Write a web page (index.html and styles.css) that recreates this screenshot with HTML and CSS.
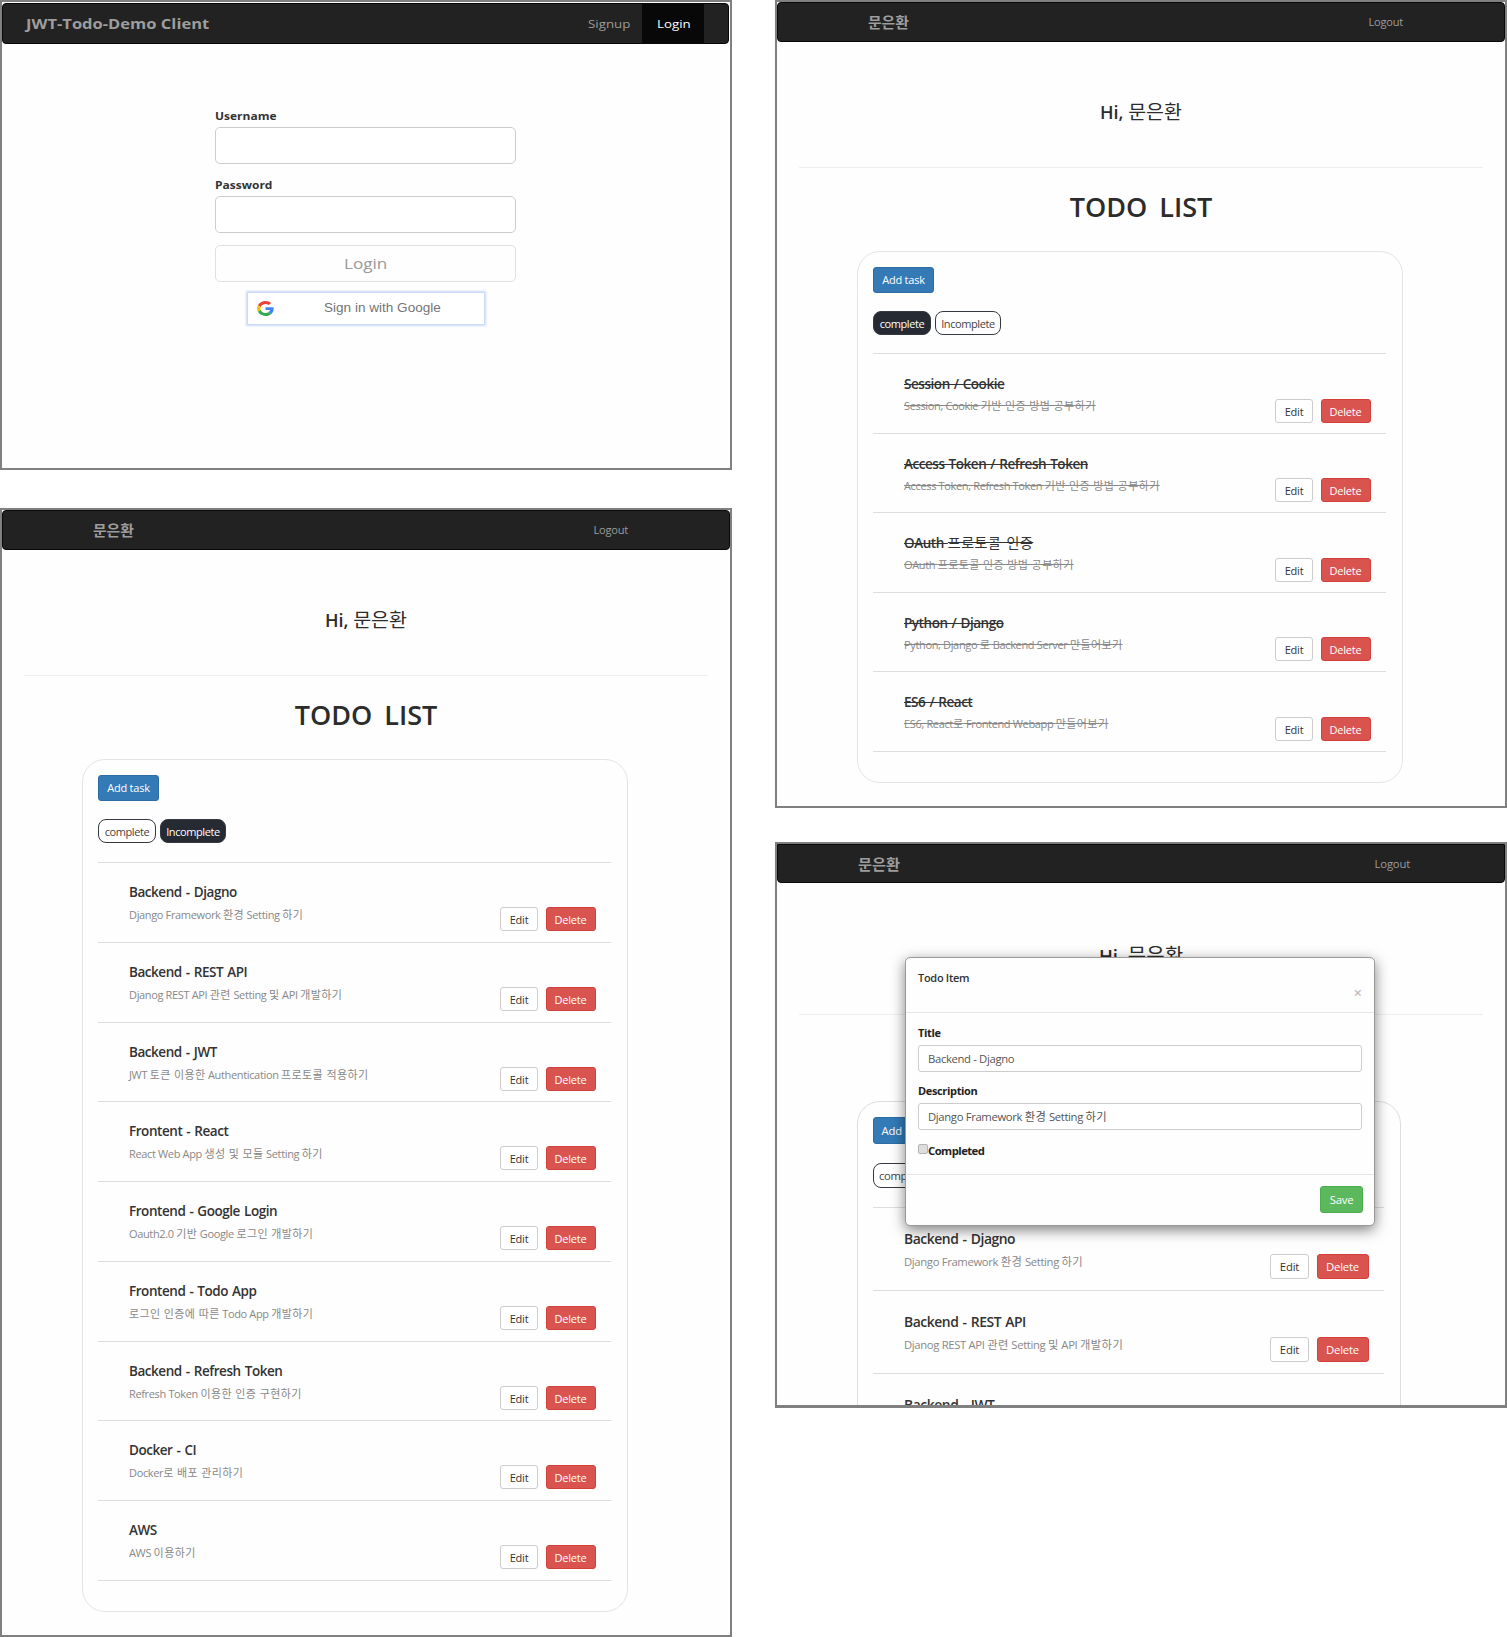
FILE: index.html
```html
<!DOCTYPE html>
<html lang="en">
<head>
<meta charset="utf-8">
<title>JWT-Todo-Demo Client</title>
<link rel="stylesheet" href="styles.css">
</head>
<body>
<main class="board">
  <div class="column">
    <section class="screen screen-login">
      <nav class="navbar">
        <span class="brand"><span class="wide">JWT-Todo-Demo Client</span></span>
        <a class="nav-link"><span class="wide">Signup</span></a>
        <a class="nav-link active"><span class="wide">Login</span></a>
      </nav>
      <form class="login-form">
        <label class="login-label"><span class="wide">Username</span></label>
        <div class="login-input"></div>
        <label class="login-label"><span class="wide">Password</span></label>
        <div class="login-input"></div>
        <div class="login-button"><span class="wide">Login</span></div>
        <div class="google-button">
          <svg class="google-logo" viewBox="0 0 48 48" preserveAspectRatio="none">
            <path fill="#EA4335" d="M24 9.5c3.54 0 6.71 1.22 9.21 3.6l6.85-6.85C35.9 2.38 30.47 0 24 0 14.62 0 6.51 5.38 2.56 13.22l7.98 6.19C12.43 13.72 17.74 9.5 24 9.5z"/>
            <path fill="#4285F4" d="M46.98 24.55c0-1.57-.15-3.09-.38-4.55H24v9.02h12.94c-.58 2.96-2.26 5.48-4.78 7.18l7.73 6c4.51-4.18 7.09-10.36 7.09-17.65z"/>
            <path fill="#FBBC05" d="M10.53 28.59c-.48-1.45-.76-2.99-.76-4.59s.27-3.14.76-4.59l-7.98-6.19C.92 16.46 0 20.12 0 24c0 3.88.92 7.54 2.56 10.78l7.97-6.19z"/>
            <path fill="#34A853" d="M24 48c6.48 0 11.93-2.13 15.89-5.81l-7.73-6c-2.15 1.45-4.92 2.3-8.16 2.3-6.26 0-11.57-4.22-13.47-9.91l-7.98 6.19C6.51 42.62 14.62 48 24 48z"/>
          </svg>
          <span class="google-text">Sign in with Google</span>
        </div>
      </form>
    </section>

    <section class="screen screen-todo screen-incomplete">
      <nav class="navbar"><span class="brand">문은환</span><a class="nav-link">Logout</a></nav>
      <header class="greeting">Hi, <span class="name">문은환</span></header>
      <h1 class="heading">TODO LIST</h1>
      <div class="card">
        <div class="btn btn-add">Add task</div>
        <div class="tabs"><span class="tab tab-complete">complete</span><span class="tab tab-incomplete on">Incomplete</span></div>
        <ul class="list">
          <li class="item"><div class="item-text"><b class="item-title">Backend - Djagno</b><span class="item-desc">Django Framework <span class="ko">환경</span> Setting <span class="ko">하기</span></span></div><span class="btn btn-edit">Edit</span><span class="btn btn-delete">Delete</span></li>
          <li class="item"><div class="item-text"><b class="item-title">Backend - REST API</b><span class="item-desc">Djanog REST API <span class="ko">관련</span> Setting <span class="ko">및</span> API <span class="ko">개발하기</span></span></div><span class="btn btn-edit">Edit</span><span class="btn btn-delete">Delete</span></li>
          <li class="item"><div class="item-text"><b class="item-title">Backend - JWT</b><span class="item-desc">JWT <span class="ko">토큰 이용한</span> Authentication <span class="ko">프로토콜 적용하기</span></span></div><span class="btn btn-edit">Edit</span><span class="btn btn-delete">Delete</span></li>
          <li class="item"><div class="item-text"><b class="item-title">Frontent - React</b><span class="item-desc">React Web App <span class="ko">생성 및 모듈</span> Setting <span class="ko">하기</span></span></div><span class="btn btn-edit">Edit</span><span class="btn btn-delete">Delete</span></li>
          <li class="item"><div class="item-text"><b class="item-title">Frontend - Google Login</b><span class="item-desc">Oauth2.0 <span class="ko">기반</span> Google <span class="ko">로그인 개발하기</span></span></div><span class="btn btn-edit">Edit</span><span class="btn btn-delete">Delete</span></li>
          <li class="item"><div class="item-text"><b class="item-title">Frontend - Todo App</b><span class="item-desc"><span class="ko">로그인 인증에 따른</span> Todo App <span class="ko">개발하기</span></span></div><span class="btn btn-edit">Edit</span><span class="btn btn-delete">Delete</span></li>
          <li class="item"><div class="item-text"><b class="item-title">Backend - Refresh Token</b><span class="item-desc">Refresh Token <span class="ko">이용한 인증 구현하기</span></span></div><span class="btn btn-edit">Edit</span><span class="btn btn-delete">Delete</span></li>
          <li class="item"><div class="item-text"><b class="item-title">Docker - CI</b><span class="item-desc">Docker<span class="ko">로 배포 관리하기</span></span></div><span class="btn btn-edit">Edit</span><span class="btn btn-delete">Delete</span></li>
          <li class="item"><div class="item-text"><b class="item-title">AWS</b><span class="item-desc">AWS <span class="ko">이용하기</span></span></div><span class="btn btn-edit">Edit</span><span class="btn btn-delete">Delete</span></li>
        </ul>
      </div>
    </section>
  </div>

  <div class="column">
    <section class="screen screen-todo screen-complete">
      <nav class="navbar"><span class="brand">문은환</span><a class="nav-link">Logout</a></nav>
      <header class="greeting">Hi, <span class="name">문은환</span></header>
      <h1 class="heading">TODO LIST</h1>
      <div class="card">
        <div class="btn btn-add">Add task</div>
        <div class="tabs"><span class="tab tab-complete on">complete</span><span class="tab tab-incomplete">Incomplete</span></div>
        <ul class="list done">
          <li class="item"><div class="item-text"><b class="item-title">Session / Cookie</b><span class="item-desc">Session, Cookie <span class="ko">기반 인증 방법 공부하기</span></span></div><span class="btn btn-edit">Edit</span><span class="btn btn-delete">Delete</span></li>
          <li class="item"><div class="item-text"><b class="item-title">Access Token / Refresh Token</b><span class="item-desc">Access Token, Refresh Token <span class="ko">기반 인증 방법 공부하기</span></span></div><span class="btn btn-edit">Edit</span><span class="btn btn-delete">Delete</span></li>
          <li class="item"><div class="item-text"><b class="item-title">OAuth <span class="ko">프로토콜 인증</span></b><span class="item-desc">OAuth <span class="ko">프로토콜 인증 방법 공부하기</span></span></div><span class="btn btn-edit">Edit</span><span class="btn btn-delete">Delete</span></li>
          <li class="item"><div class="item-text"><b class="item-title">Python / Django</b><span class="item-desc">Python, Django <span class="ko">로</span> Backend Server <span class="ko">만들어보기</span></span></div><span class="btn btn-edit">Edit</span><span class="btn btn-delete">Delete</span></li>
          <li class="item"><div class="item-text"><b class="item-title">ES6 / React</b><span class="item-desc">ES6, React<span class="ko">로</span> Frontend Webapp <span class="ko">만들어보기</span></span></div><span class="btn btn-edit">Edit</span><span class="btn btn-delete">Delete</span></li>
        </ul>
      </div>
    </section>

    <section class="screen screen-todo screen-modal">
      <nav class="navbar"><span class="brand">문은환</span><a class="nav-link">Logout</a></nav>
      <header class="greeting">Hi, <span class="name">문은환</span></header>
      <h1 class="heading">TODO LIST</h1>
      <div class="card">
        <div class="btn btn-add">Add task</div>
        <div class="tabs"><span class="tab tab-complete">complete</span></div>
        <ul class="list">
          <li class="item"><div class="item-text"><b class="item-title">Backend - Djagno</b><span class="item-desc">Django Framework <span class="ko">환경</span> Setting <span class="ko">하기</span></span></div><span class="btn btn-edit">Edit</span><span class="btn btn-delete">Delete</span></li>
          <li class="item"><div class="item-text"><b class="item-title">Backend - REST API</b><span class="item-desc">Djanog REST API <span class="ko">관련</span> Setting <span class="ko">및</span> API <span class="ko">개발하기</span></span></div><span class="btn btn-edit">Edit</span><span class="btn btn-delete">Delete</span></li>
          <li class="item"><div class="item-text"><b class="item-title">Backend - JWT</b></div></li>
        </ul>
      </div>
      <div class="modal">
        <div class="modal-header"><span class="modal-title">Todo Item</span><span class="modal-close">×</span></div>
        <div class="modal-body">
          <label class="field-label">Title</label>
          <div class="field">Backend - Djagno</div>
          <label class="field-label">Description</label>
          <div class="field">Django Framework <span class="ko">환경</span> Setting <span class="ko">하기</span></div>
          <div class="check-row"><span class="checkbox"></span><span class="check-label">Completed</span></div>
        </div>
        <div class="modal-footer"><span class="btn btn-save">Save</span></div>
      </div>
    </section>
  </div>
</main>
</body>
</html>
```
FILE: styles.css
```css
* { box-sizing: border-box; }

body {
  margin: 0;
  background: #fff;
  color: #333;
  font-family: "Open Sans", "Noto Sans CJK KR", sans-serif;
  font-size: 11px;
  line-height: 20px;
}

.board {
  display: grid;
  grid-template-columns: 732px 732px;
  column-gap: 43px;
  width: 1507px;
  height: 1637px;
  overflow: hidden;
}

.column { display: flex; flex-direction: column; }

.screen {
  border: 2px solid #808080;
  background: #fefefe;
  overflow: hidden;
  flex: none;
}

/* navigation bar */
.navbar {
  display: flex;
  align-items: center;
  height: 40px;
  background: #222;
  border: 1px solid #080808;
  border-radius: 4px;
  color: #9d9d9d;
}
.brand { flex: 1; font-size: 14.8px; font-weight: 700; white-space: nowrap; }

/* login screen */
.wide { display: inline-block; transform: scaleX(1.18); transform-origin: 0 50%; }
.screen-login { height: 470px; margin-bottom: 38px; }
.screen-login .navbar { height: 41px; margin: 1px 1px 0 0; padding: 0 24px 0 23px; }
.screen-login .brand { font-size: 14px; font-weight: 700; }
.screen-login .nav-link {
  width: 62px;
  height: 39px;
  padding: 1px 0 0 15px;
  font-size: 11.3px;
  line-height: 38px;
}
.screen-login .nav-link:not(.active) { width: 69px; }
.screen-login .active { background: #080808; color: #fff; }

.login-form { width: 301px; margin: 61px auto 0 213px; }
.login-label {
  display: block;
  height: 22px;
  font-size: 11px;
  font-weight: 700;
  line-height: 21px;
}
.login-label .wide { transform: scaleX(1.09); }
.login-input {
  height: 37px;
  margin-bottom: 9.5px;
  border: 1px solid #ccc;
  border-radius: 5px;
  background: #fff;
}
.login-button {
  height: 37px;
  margin-top: 12px;
  border: 1px solid #e0e0e0;
  border-radius: 5px;
  padding-left: 128px;
  color: #999;
  font-size: 14.5px;
  line-height: 36px;
}
.google-button {
  display: flex;
  align-items: center;
  width: 236px;
  height: 31px;
  margin: 11px 0 0 33px;
  padding: 0 9px;
  background: #fff;
  box-shadow: 0 0 2px 2px #c9d9f8;
  color: #757575;
}
.google-logo { width: 17px; height: 15px; }
.google-text {
  margin: -1px 0 0 50px;
  font: 12px/20px "Liberation Sans", sans-serif;
  white-space: nowrap;
  transform: scaleX(1.13);
  transform-origin: 0 50%;
}

/* todo screens */
.screen-todo .navbar { padding: 0 101px 0 90px; }
.screen-todo .nav-link { letter-spacing: -.2px; }
.greeting {
  height: 126px;
  margin: 0 22px;
  padding-top: 55px;
  border-bottom: 1px solid #eee;
  color: #2c2c2c;
  font-size: 18px;
  font-weight: 600;
  line-height: 30px;
  text-align: center;
}
.name { font-size: 19.5px; font-weight: 400; }
.heading {
  margin: 19px 0 0;
  height: 64px;
  color: #2c2c2c;
  font-size: 27px;
  font-weight: 600;
  line-height: 40px;
  text-align: center;
  word-spacing: 5px;
}
.card {
  width: 546px;
  margin-left: 80px;
  padding: 15px 16px 30px 15px;
  border: 1px solid #e4e4e4;
  border-radius: 23px;
}
.btn {
  display: block;
  height: 24px;
  border: 1px solid transparent;
  border-radius: 3px;
  letter-spacing: -.2px;
  line-height: 24px;
  text-align: center;
  white-space: nowrap;
}
.btn-add { width: 61px; height: 26px; background: #337ab7; border-color: #2e6da4; color: #fff; }
.tabs { display: flex; gap: 4px; margin-top: 18px; height: 43px; }
.tab {
  height: 24px;
  border: 1px solid #343a40;
  border-radius: 8px;
  background: #fff;
  color: #444;
  letter-spacing: -.4px;
  line-height: 23px;
  text-align: center;
}
.tab-complete { width: 58px; }
.tab-incomplete { width: 66px; }
.tab.on { background: #252a33; color: #fff; }

.list { margin: 0; padding: 0; list-style: none; border-top: 1px solid #ddd; }
.item {
  display: flex;
  height: 79.75px;
  padding: 19px 15.5px 0 31px;
  border-bottom: 1px solid #ddd;
}
.item-text { flex: 1; white-space: nowrap; }
.item-title {
  display: block;
  width: max-content;
  color: #333;
  font-size: 13.5px;
  font-weight: 600;
  letter-spacing: -.45px;
  word-spacing: 1px;
}
.item-desc { display: block; width: max-content; margin-top: 3px; color: #888; letter-spacing: -.35px; }
.ko { letter-spacing: .4px; }
.item-title .ko { font-size: 14px; font-weight: 400; letter-spacing: .5px; }
.item .btn { margin-top: 25px; }
.btn-edit { width: 38px; background: #fff; border-color: #ccc; color: #333; }
.btn-delete { width: 50px; margin-left: 7.5px; background: #d9534f; border-color: #d43f3a; color: #fff; }
.done .item-title, .done .item-desc { text-decoration: line-through; }

.screen-incomplete { height: 1129px; }
.screen-complete { height: 808px; margin-bottom: 34px; }
.screen-complete .tabs { height: 42px; }
.screen-complete .item { height: 79.6px; padding-top: 20px; }
.screen-complete .item-desc { margin-top: 2px; }
.screen-complete .item .btn { margin-top: 24.5px; }

/* screen with the open dialog */
.screen-modal { position: relative; height: 566px; border-bottom: 3px solid #808080; font-size: 11.3px; }
.screen-modal .navbar { height: 39px; padding: 0 94px 0 80px; border-radius: 0 0 4px 4px; }
.screen-modal .brand { font-size: 15.2px; }
.screen-modal .greeting { height: 132px; padding-top: 58px; font-size: 18.5px; }
.screen-modal .name { font-size: 20px; }
.screen-modal .heading { height: 67px; }
.screen-modal .card { width: 544px; padding-bottom: 60px; border-color: #ddd; }
.screen-modal .btn-add { height: 27px; line-height: 25px; }
.screen-modal .tabs { margin-top: 19px; height: 44px; }
.screen-modal .tab { height: 25px; }
.screen-modal .item { height: 83px; padding-top: 21px; }
.screen-modal .item-title { font-size: 13.9px; }
.screen-modal .item-desc { margin-top: 3px; }
.screen-modal .item .btn { height: 25px; margin-top: 25px; }
.screen-modal .btn-edit { width: 39px; }
.screen-modal .btn-delete { width: 52px; }

.modal {
  position: absolute;
  left: 128px;
  top: 113px;
  width: 470px;
  height: 269px;
  border: 1px solid #999;
  border-radius: 5px;
  background: #fefefe;
  box-shadow: 0 4px 14px rgba(0, 0, 0, .5);
}
.modal-header {
  display: flex;
  flex-direction: column;
  height: 55px;
  padding: 10px 12px 0;
  border-bottom: 1px solid #e5e5e5;
}
.modal-title { line-height: 19px; font-size: 11px; font-weight: 600; letter-spacing: -.3px; }
.modal-close { align-self: flex-end; line-height: 11px; color: #bbb; font-size: 15px; font-weight: 600; }
.modal-body { height: 162px; padding: 10px 12px 0; border-bottom: 1px solid #e5e5e5; }
.field-label { display: block; height: 22px; font-size: 11px; font-weight: 700; letter-spacing: -.35px; color: #222; }
.field {
  height: 27px;
  margin-bottom: 9px;
  padding-left: 9px;
  border: 1px solid #ccc;
  border-radius: 3px;
  background: #fff;
  color: #555;
  letter-spacing: -.35px;
  line-height: 26px;
}
.check-row { display: flex; margin-top: 11px; }
.checkbox {
  width: 10px;
  height: 10px;
  margin-top: 3px;
  border: 1px solid #b4b4b4;
  border-radius: 2px;
  background: #ddd;
}
.check-label { color: #222; font-weight: 700; letter-spacing: -.55px; line-height: 20px; }
.modal-footer { display: flex; justify-content: flex-end; padding: 11px 11px 0; }
.btn-save { width: 43px; height: 27px; background: #5cb85c; border-color: #4cae4c; color: #fff; line-height: 26px; }
```
